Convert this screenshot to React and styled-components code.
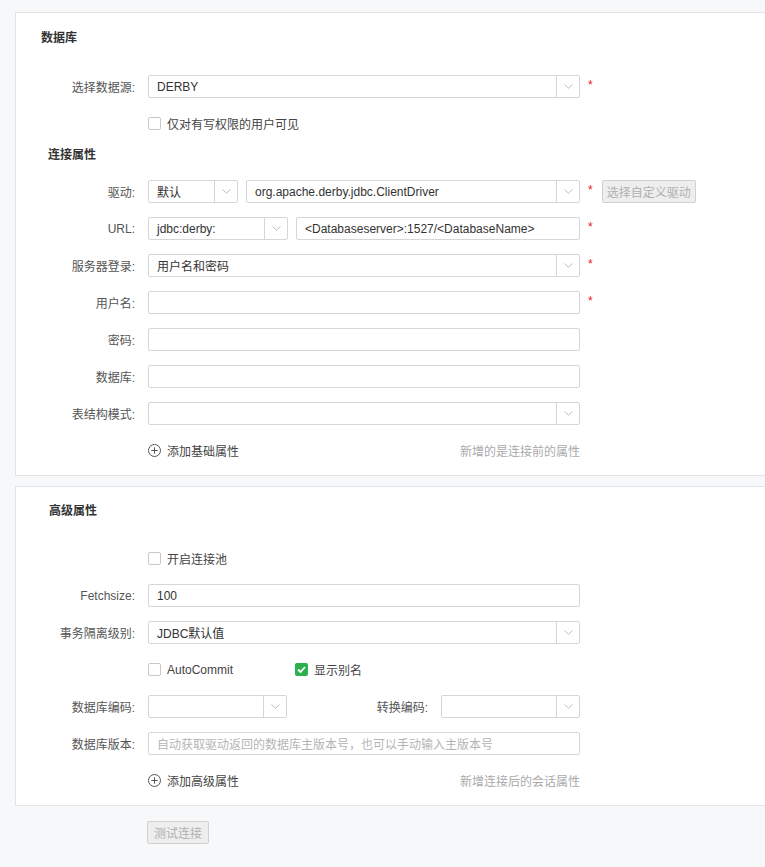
import React from "react";
import styled, { createGlobalStyle } from "styled-components";

const Global = createGlobalStyle`
  html, body {
    margin: 0;
    padding: 0;
    background: #f7f8fa;
    overflow: hidden;
  }
  body {
    font-family: "Liberation Sans", "Noto Sans CJK SC", sans-serif;
    font-size: 12px;
    color: #333;
  }
`;

const Page = styled.div`
  padding: 12px 0 0 15px;
  width: 780px;
  height: 855px;
`;

const Panel = styled.div`
  background: #fff;
  border: 1px solid #e3e4e6;
  width: 780px;
  padding: ${(p) => p.$pad || "18px 0 13px 0"};
  box-sizing: border-box;
  margin-bottom: ${(p) => p.$mb || "0"};
`;

const Title = styled.div`
  font-weight: bold;
  font-size: 12px;
  line-height: 14px;
  height: 14px;
  color: #333;
  padding-left: ${(p) => p.$left}px;
  margin-bottom: ${(p) => p.$mb || 0}px;
`;

const Row = styled.div`
  display: flex;
  align-items: center;
  height: 23px;
  margin-bottom: ${(p) => (p.$mb === undefined ? 14 : p.$mb)}px;
`;

const Label = styled.div`
  width: 119px;
  text-align: right;
  color: #555;
  margin-right: 13px;
  white-space: nowrap;
  flex: none;
`;

const SubLabel = styled.div`
  width: ${(p) => p.$w}px;
  text-align: right;
  color: #555;
  padding-right: 13px;
  box-sizing: border-box;
  white-space: nowrap;
  flex: none;
`;

const Field = styled.div`
  width: ${(p) => p.$w}px;
  height: 23px;
  box-sizing: border-box;
  border: 1px solid #d5d6d8;
  border-radius: 2px;
  background: #fff;
  display: flex;
  align-items: center;
  margin-right: ${(p) => p.$mr || 0}px;
  flex: none;
`;

const FieldText = styled.div`
  flex: 1;
  padding-left: 8px;
  color: ${(p) => (p.$ph ? "#b5b5b5" : "#333")};
  white-space: nowrap;
  overflow: hidden;
`;

const Arrow = styled.div`
  width: 22px;
  height: 100%;
  border-left: 1px solid #d5d6d8;
  display: flex;
  align-items: center;
  justify-content: center;
  flex: none;
`;

const Star = styled.span`
  color: #e02020;
  margin-left: 8px;
  font-size: 12px;
  line-height: 12px;
  position: relative;
  top: -2px;
`;

const GhostButton = styled.button`
  height: 23px;
  border: 1px solid #d0d0d0;
  background: #eeeeee;
  color: #b0b0b0;
  font: inherit;
  font-size: 12px;
  padding: 0 ${(p) => p.$px || 5}px;
  border-radius: 2px;
  margin-left: ${(p) => p.$ml || 0}px;
`;

const Check = styled.span`
  width: 13px;
  height: 13px;
  box-sizing: border-box;
  border: ${(p) => (p.$on ? "none" : "1px solid #c8c8c8")};
  background: ${(p) => (p.$on ? "#2bb24c" : "#fff")};
  border-radius: 2px;
  display: inline-flex;
  align-items: center;
  justify-content: center;
  margin-right: 6px;
  flex: none;
`;

const CheckItem = styled.div`
  display: flex;
  align-items: center;
  width: ${(p) => (p.$w ? p.$w + "px" : "auto")};
  color: #444;
`;

const Indent = styled.div`
  width: 132px;
  flex: none;
`;

const AddLine = styled.div`
  display: flex;
  align-items: center;
  justify-content: space-between;
  width: 432px;
`;

const AddLink = styled.div`
  display: flex;
  align-items: center;
  color: #444;
  gap: 6px;
`;

const Hint = styled.div`
  color: #aaa;
`;

const Footer = styled.div`
  padding: 15px 0 0 132px;
`;

const Chevron = () => (
  <svg width="9" height="5" viewBox="0 0 9 5">
    <path d="M0.5 0.5 L4.5 4.2 L8.5 0.5" fill="none" stroke="#bdbdbd" strokeWidth="1" />
  </svg>
);

const Select = ({ w, value, mr }) => (
  <Field $w={w} $mr={mr}>
    <FieldText>{value}</FieldText>
    <Arrow>
      <Chevron />
    </Arrow>
  </Field>
);

const Input = ({ w = 432, value, ph, mr }) => (
  <Field $w={w} $mr={mr}>
    <FieldText $ph={ph}>{value || ph}</FieldText>
  </Field>
);

const Tick = () => (
  <svg width="9" height="7" viewBox="0 0 9 7">
    <path d="M1 3.5 L3.5 6 L8 1" fill="none" stroke="#fff" strokeWidth="1.8" />
  </svg>
);

const PlusCircle = () => (
  <svg width="13" height="13" viewBox="0 0 13 13">
    <circle cx="6.5" cy="6.5" r="6" fill="none" stroke="#555" strokeWidth="1" />
    <path d="M6.5 3.3 V9.7 M3.3 6.5 H9.7" stroke="#555" strokeWidth="1" />
  </svg>
);

const App = () => {
  return (
    <>
      <Global />
      <Page>
        <Panel $mb="10px">
          <Title $left={25} $mb={30}>数据库</Title>
          <Row>
            <Label>选择数据源:</Label>
            <Select w={432} value="DERBY" />
            <Star>*</Star>
          </Row>
          <Row $mb={13}>
            <Indent />
            <CheckItem>
              <Check />
              仅对有写权限的用户可见
            </CheckItem>
          </Row>
          <Title $left={32} $mb={18}>连接属性</Title>
          <Row>
            <Label>驱动:</Label>
            <Select w={90} value="默认" mr={8} />
            <Select w={334} value="org.apache.derby.jdbc.ClientDriver" />
            <Star>*</Star>
            <GhostButton $ml={9} $px={4}>选择自定义驱动</GhostButton>
          </Row>
          <Row>
            <Label>URL:</Label>
            <Select w={140} value="jdbc:derby:" mr={8} />
            <Input w={284} value="<Databaseserver>:1527/<DatabaseName>" />
            <Star>*</Star>
          </Row>
          <Row>
            <Label>服务器登录:</Label>
            <Select w={432} value="用户名和密码" />
            <Star>*</Star>
          </Row>
          <Row>
            <Label>用户名:</Label>
            <Input />
            <Star>*</Star>
          </Row>
          <Row>
            <Label>密码:</Label>
            <Input />
          </Row>
          <Row>
            <Label>数据库:</Label>
            <Input />
          </Row>
          <Row>
            <Label>表结构模式:</Label>
            <Select w={432} />
          </Row>
          <Row $mb={0}>
            <Indent />
            <AddLine>
              <AddLink>
                <PlusCircle />
                添加基础属性
              </AddLink>
              <Hint>新增的是连接前的属性</Hint>
            </AddLine>
          </Row>
        </Panel>

        <Panel $pad="17px 0 13px 0">
          <Title $left={33} $mb={29}>高级属性</Title>
          <Row>
            <Indent />
            <CheckItem>
              <Check />
              开启连接池
            </CheckItem>
          </Row>
          <Row>
            <Label>Fetchsize:</Label>
            <Input value="100" />
          </Row>
          <Row>
            <Label>事务隔离级别:</Label>
            <Select w={432} value="JDBC默认值" />
          </Row>
          <Row>
            <Indent />
            <CheckItem $w={147}>
              <Check />
              AutoCommit
            </CheckItem>
            <CheckItem>
              <Check $on>
                <Tick />
              </Check>
              显示别名
            </CheckItem>
          </Row>
          <Row>
            <Label>数据库编码:</Label>
            <Select w={139} />
            <SubLabel $w={154}>转换编码:</SubLabel>
            <Select w={139} />
          </Row>
          <Row>
            <Label>数据库版本:</Label>
            <Input ph="自动获取驱动返回的数据库主版本号，也可以手动输入主版本号" />
          </Row>
          <Row $mb={0}>
            <Indent />
            <AddLine>
              <AddLink>
                <PlusCircle />
                添加高级属性
              </AddLink>
              <Hint>新增连接后的会话属性</Hint>
            </AddLine>
          </Row>
        </Panel>

        <Footer>
          <GhostButton $px={6}>测试连接</GhostButton>
        </Footer>
      </Page>
    </>
  );
};

export default App;
